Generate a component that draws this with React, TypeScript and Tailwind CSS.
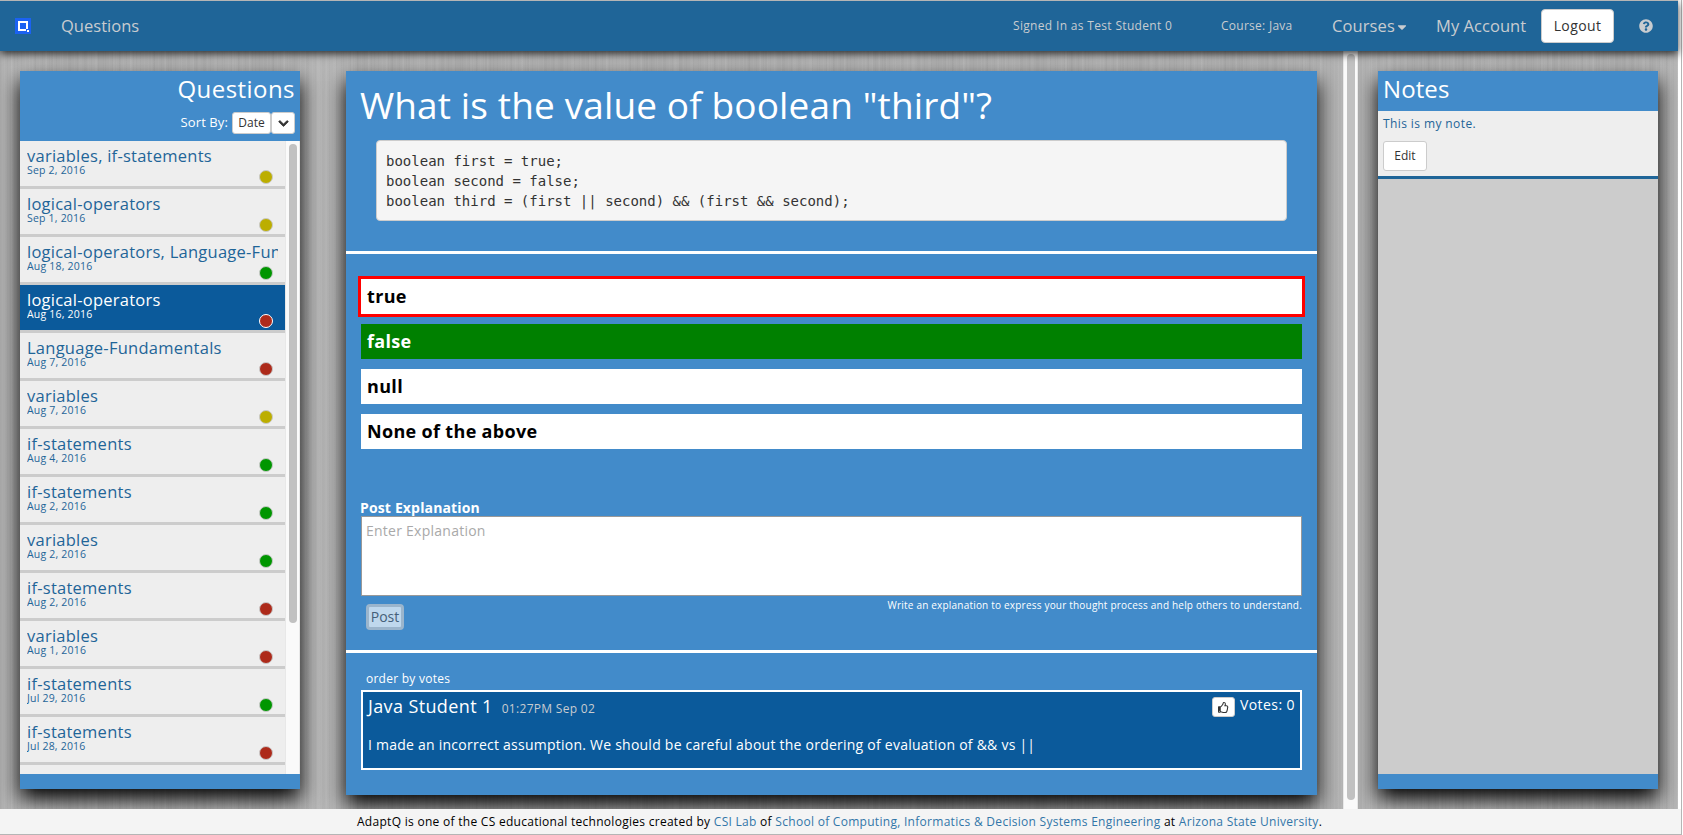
import { FaCaretDown, FaChevronDown, FaQuestionCircle, FaRegThumbsUp } from "react-icons/fa";

type Status = "partial" | "correct" | "wrong";

const dotColor: Record<Status, string> = {
  partial: "bg-[#bcae00]",
  correct: "bg-[#009600]",
  wrong: "bg-[#ad2a1a]",
};

const questions: { title: string; date: string; status: Status; active?: boolean }[] = [
  { title: "variables, if-statements", date: "Sep 2, 2016", status: "partial" },
  { title: "logical-operators", date: "Sep 1, 2016", status: "partial" },
  { title: "logical-operators, Language-Fundamentals", date: "Aug 18, 2016", status: "correct" },
  { title: "logical-operators", date: "Aug 16, 2016", status: "wrong", active: true },
  { title: "Language-Fundamentals", date: "Aug 7, 2016", status: "wrong" },
  { title: "variables", date: "Aug 7, 2016", status: "partial" },
  { title: "if-statements", date: "Aug 4, 2016", status: "correct" },
  { title: "if-statements", date: "Aug 2, 2016", status: "correct" },
  { title: "variables", date: "Aug 2, 2016", status: "correct" },
  { title: "if-statements", date: "Aug 2, 2016", status: "wrong" },
  { title: "variables", date: "Aug 1, 2016", status: "wrong" },
  { title: "if-statements", date: "Jul 29, 2016", status: "correct" },
  { title: "if-statements", date: "Jul 28, 2016", status: "wrong" },
  { title: "if-statements", date: "Jul 27, 2016", status: "correct" },
];

const answers: { label: string; look: string }[] = [
  { label: "true", look: "bg-white text-black outline-3 outline-[#ff0000]" },
  { label: "false", look: "bg-[#008000] text-white" },
  { label: "null", look: "bg-white text-black" },
  { label: "None of the above", look: "bg-white text-black" },
];

const code = `boolean first = true;
boolean second = false;
boolean third = (first || second) && (first && second);`;

function Logo() {
  return (
    <svg width="16" height="16" viewBox="0 0 16 16" shapeRendering="crispEdges">
      <rect width="16" height="16" fill="#1b62f2" />
      <path d="M3 3h10v8h-2v2H3z" fill="#fff" />
      <rect x="5" y="5" width="6" height="6" fill="#1b62f2" />
      <rect x="12" y="12" width="2" height="2" fill="#fff" />
    </svg>
  );
}

function NavBar() {
  return (
    <nav className="relative z-10 flex h-[51px] w-[1678px] shrink-0 items-center border-t border-[#b5b5b5] bg-[#1f6598] pl-[15px] text-[16.5px] text-[#c8ccd0] shadow-[0_3px_8px_rgba(0,0,0,0.75)]">
      <Logo />
      <span className="ml-[30px] tracking-[0.02px]">Questions</span>
      <span className="ml-auto w-[208px] pb-px text-xs tracking-[0.33px]">Signed In as Test Student 0</span>
      <span className="w-[111px] pb-px text-xs tracking-[0.27px]">Course: Java</span>
      <span className="flex w-[104px] items-center gap-0 tracking-[0.1px]">
        Courses
        <FaCaretDown className="mt-0.5 size-3.5" />
      </span>
      <span className="w-[105px] tracking-[0.05px]">My Account</span>
      <button className="h-[34px] w-[73px] rounded border border-[#ccc] bg-white text-sm tracking-[0.4px] text-[#333]">
        Logout
      </button>
      <FaQuestionCircle className="mr-[25px] ml-[25px] size-[14px]" />
    </nav>
  );
}

function Sidebar() {
  return (
    <aside className="flex h-[718px] w-[280px] flex-col bg-[#428bca] shadow-[0_10px_20px_#000]">
      <header className="flex h-[70px] shrink-0 flex-col items-end pr-[5px] text-white">
        <h2 className="pt-px text-2xl leading-[34px] tracking-[0.45px]">Questions</h2>
        <div className="mt-1.5 flex items-center text-[13px]">
          <span className="mr-1 tracking-[0.1px]">Sort By:</span>
          <button className="h-[22px] w-[39px] rounded-[3px] border border-[#ccc] bg-white text-xs leading-[20px] text-[#333]">
            Date
          </button>
          <button className="flex h-[22px] w-[24px] items-center justify-center rounded-[3px] border border-[#ccc] bg-white text-[#333]">
            <FaChevronDown className="size-[11px] stroke-[#333] stroke-[36]" />
          </button>
        </div>
      </header>
      <div className="flex h-[633px] overflow-hidden">
        <ul className="w-[265px]">
          {questions.map((q, i) => (
            <li
              key={i}
              className={
                "flex h-12 justify-between border-b-3 border-[#ccc] pl-[7px] " +
                (q.active ? "bg-[#0b5a9b] text-white" : "bg-[#eee] text-[#1f6598]")
              }
            >
              <div className="w-[251px] overflow-hidden whitespace-nowrap">
                <div className="pt-1.5 text-[16.5px] leading-[18px] tracking-[0.25px]">{q.title}</div>
                <div className="text-[10.5px] leading-[11px] tracking-[0.2px]">{q.date}</div>
              </div>
              <span
                className={
                  "mt-[29px] mr-3 -ml-5 box-border size-[14px] shrink-0 rounded-full border " +
                  (q.active ? "border-white " : "border-[#c9c9c9] ") +
                  dotColor[q.status]
                }
              />
            </li>
          ))}
        </ul>
        <div className="w-[15px] border-x border-[#e8e8e8] bg-[#fafafa] pt-[3px]">
          <div className="ml-[3px] h-[479px] w-2 rounded-full bg-[#c1c1c1]" />
        </div>
      </div>
    </aside>
  );
}

function Question() {
  return (
    <main className="flex h-[724px] w-[971px] flex-col bg-[#428bca] text-white shadow-[0_10px_20px_#000]">
      <section className="h-[183px] shrink-0 border-b-3 border-white px-[15px]">
        <h1 className="-ml-px h-[69px] pt-[9px] text-[37px] leading-[50px] tracking-[0.13px]">
          What is the value of boolean "third"?
        </h1>
        <pre className="mx-[15px] h-[81px] rounded border border-[#ccc] bg-[#f5f5f5] px-[9px] py-[10px] font-['DejaVu_Sans_Mono',monospace] text-[14px] leading-[20px] text-[#333]">
          {code}
        </pre>
      </section>
      <section className="flex h-[399px] shrink-0 flex-col border-b-3 border-white px-[15px] pt-[25px]">
        <div className="flex flex-col gap-[10px]">
          {answers.map((a) => (
            <div
              key={a.label}
              className={"h-[35px] pl-1.5 text-[18px] leading-[34px] font-bold tracking-[0.33px] " + a.look}
            >
              {a.label}
            </div>
          ))}
        </div>
        <label className="mt-[50px] -ml-px text-sm leading-[17px] font-bold tracking-[0.15px]">Post Explanation</label>
        <div className="h-20 border border-[#999] bg-white px-1 pt-[5px] text-sm leading-[18px] tracking-[0.25px] text-[#a9a9a9]">
          Enter Explanation
        </div>
        <div className="flex justify-between">
          <button className="mt-2 ml-[5px] h-[26px] w-[38px] rounded border-3 border-[#9bb5cc] bg-[#bfd8ed] text-sm leading-[20px] text-[#456079]">
            Post
          </button>
          <p className="pt-0.5 text-[10px] leading-[14px] tracking-[0.2px]">
            Write an explanation to express your thought process and help others to understand.
          </p>
        </div>
      </section>
      <section className="px-[15px] pt-[17px]">
        <div className="h-5 pl-[5px] text-xs leading-[18px] tracking-[0.25px]">order by votes</div>
        <article className="h-20 border-2 border-white bg-[#0b5a9b] pr-[5px] pl-[5px]">
          <div className="flex h-[43px] justify-between">
            <div className="flex h-[28px] items-baseline gap-[9px]">
              <span className="text-[18px] leading-[29px] tracking-[0.38px]">Java Student 1</span>
              <span className="text-xs tracking-[0.3px] text-[#c8ccd0]">01:27PM Sep 02</span>
            </div>
            <div className="flex items-start">
              <button className="mt-[5px] mr-[5px] flex h-5 w-[23px] items-center justify-center rounded-[3px] border border-[#ccc] bg-white text-[#333]">
                <FaRegThumbsUp className="size-[11px]" />
              </button>
              <span className="pt-[3px] text-sm leading-[20px] tracking-[0.42px]">Votes: 0</span>
            </div>
          </div>
          <p className="text-sm leading-[20px] tracking-[0.24px]">
            I made an incorrect assumption. We should be careful about the ordering of evaluation of &amp;&amp; vs ||
          </p>
        </article>
      </section>
    </main>
  );
}

function Notes() {
  return (
    <aside className="flex h-[718px] w-[280px] flex-col bg-[#428bca] shadow-[0_10px_20px_#000]">
      <h2 className="h-10 pt-px pl-[5px] text-2xl leading-[34px] tracking-[0.1px] text-white">Notes</h2>
      <div className="h-[68px] border-b-3 border-[#1f6598] bg-[#eee] pt-1 pl-[5px]">
        <p className="text-xs leading-[18px] tracking-[0.4px] text-[#1f6598]">This is my note.</p>
        <button className="mt-2 h-[30px] w-11 rounded-[3px] border border-[#ccc] bg-white text-xs text-[#333]">
          Edit
        </button>
      </div>
      <div className="h-[595px] bg-[#ccc]" />
    </aside>
  );
}

function Footer() {
  return (
    <footer className="h-[26px] w-[1681px] border-b border-[#b5b5b5] bg-[#f4f4f4] pl-[357px] text-xs leading-[26px] tracking-[0.285px] whitespace-nowrap text-black">
      AdaptQ is one of the CS educational technologies created by <a className="text-[#3276a8]">CSI Lab</a> of{" "}
      <a className="text-[#3276a8]">School of Computing, Informatics &amp; Decision Systems Engineering</a> at{" "}
      <a className="text-[#3276a8]">Arizona State University</a>.
    </footer>
  );
}

export default function App() {
  return (
    <div className="flex h-[835px] w-[1683px] overflow-hidden bg-white font-['Open_Sans',sans-serif]">
      <div className="flex w-[1681px] shrink-0 flex-col">
        <NavBar />
        <div className="flex h-[758px] w-[1678px] shrink-0 overflow-hidden bg-[#b7b7b7] bg-[repeating-linear-gradient(90deg,rgba(0,0,0,0.02)_0_1px,transparent_1px_4px,rgba(255,255,255,0.04)_4px_5px,transparent_5px_7px),repeating-linear-gradient(90deg,rgba(0,0,0,0.02)_0_2px,transparent_2px_11px,rgba(255,255,255,0.05)_11px_13px,transparent_13px_17px),repeating-linear-gradient(90deg,rgba(0,0,0,0.03),transparent_33px,rgba(0,0,0,0.03)_71px,transparent_97px)]">
          <div className="flex w-[1343px] gap-[46px] pt-5 pl-5">
            <Sidebar />
            <Question />
          </div>
          <div className="relative w-[15px] border-x border-[#e8e8e8] bg-[#fafafa] pt-[3px]">
            <div className="ml-[3px] h-[746px] w-2 rounded-full bg-[#c1c1c1]" />
          </div>
          <div className="flex-1 overflow-hidden pt-5 pl-5">
            <Notes />
          </div>
        </div>
        <Footer />
      </div>
      <div className="w-px bg-[#b5b5b5]" />
    </div>
  );
}
